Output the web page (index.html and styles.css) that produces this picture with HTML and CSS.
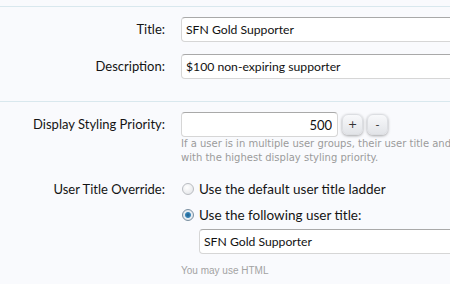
FILE: index.html
```html
<!DOCTYPE html>
<html lang="en">
<head>
  <meta charset="UTF-8" />
  <title>User Group Options</title>
  <link rel="stylesheet" href="styles.css">
</head>
<body>

  <form class="form">
    <fieldset class="section">
      <div class="row">
        <label class="label" for="title">Title:</label>
        <div class="control">
          <input class="text" id="title" type="text" value="SFN Gold Supporter" />
        </div>
      </div>
      <div class="row">
        <label class="label" for="description">Description:</label>
        <div class="control">
          <input class="text" id="description" type="text" value="$100 non-expiring supporter" />
        </div>
      </div>
    </fieldset>

    <fieldset class="section">
      <div class="row">
        <label class="label" for="priority">Display Styling Priority:</label>
        <div class="control">
          <div class="spin">
            <input class="text number" id="priority" type="text" value="500" />
            <button type="button" class="spin-btn">+</button>
            <button type="button" class="spin-btn">-</button>
          </div>
          <p class="hint">If a user is in multiple user groups, their user title and<br>with the highest display styling priority.</p>
        </div>
      </div>

      <div class="row radios">
        <span class="label">User Title Override:</span>
        <div class="control">
          <label class="radio"><span class="dot"></span>Use the default user title ladder</label>
          <label class="radio"><span class="dot on"></span>Use the following user title:</label>
          <input class="text sub" type="text" value="SFN Gold Supporter" />
          <p class="note">You may use HTML</p>
        </div>
      </div>
    </fieldset>
  </form>

</body>
</html>
```

FILE: styles.css
```css
  * {
    margin: 0;
    padding: 0;
    box-sizing: border-box;
  }

  html, body {
    width: 100%;
    height: 100%;
    overflow: hidden;
    background: #f9fafd;
    font-family: 'Lato', sans-serif;
    font-size: 13px;
    color: #141414;
  }

  .form {
    padding-top: 6px;
    overflow: hidden; /* los campos siguen mas alla del borde derecho */
  }

  /* Bloques separados por una linea */
  .section {
    border: none;
    border-top: 1px solid #d9e8ee;
    padding: 10px 0 22px;
  }

  .section:last-child {
    padding-bottom: 0;
  }

  .row {
    display: flex;
    align-items: flex-start;
    margin-bottom: 12px;
  }

  .row:last-child {
    margin-bottom: 0;
  }

  .label {
    width: 166px;
    padding-right: 1px;
    text-align: right;
    line-height: 25px;
    flex-shrink: 0;
  }

  .control {
    margin-left: 15px;
    flex: 1;
    min-width: 0;
  }

  .text {
    display: block;
    width: 320px;
    height: 25px;
    padding: 0 4px;
    font-family: 'Lato', sans-serif;
    font-size: 12.2px;
    color: #111;
    background: #fff;
    border: 1px solid #d6d6d6;
    border-top-color: #a9a9a9;
    border-radius: 4px;
    outline: none;
  }

  .spin {
    display: flex;
    align-items: center;
    gap: 4px;
  }

  .text.number {
    width: 157px;
    text-align: right;
    padding-right: 5px;
    font-size: 13px;
  }

  .spin-btn {
    width: 21px;
    height: 21px;
    font-family: 'DejaVu Sans', sans-serif;
    font-size: 11px;
    color: #333;
    background: linear-gradient(#f8f9fb, #e2e4e8);
    border: 1px solid #dcdee2;
    border-radius: 6px;
    box-shadow: 0 1px 3px rgba(0,0,0,0.35);
  }

  .hint {
    font-family: 'DejaVu Sans', sans-serif;
    font-size: 10px;
    line-height: 14px;
    color: #9b9b9b;
    white-space: nowrap;
  }

  /* Opciones de titulo */
  .radios .label {
    line-height: 24px;
  }

  .radio {
    display: flex;
    align-items: center;
    height: 24px;
    gap: 5px;
    font-size: 13.5px;
  }

  .radio + .radio {
    margin-top: 2px;
  }

  .dot {
    width: 12px;
    height: 12px;
    border-radius: 50%;
    border: 1px solid #b9bcc1;
    background: radial-gradient(circle at 40% 35%, #ffffff, #dfe1e5);
    margin-left: 1px;
  }

  .dot.on {
    background: radial-gradient(circle, #1d5e8c 0, #3a86b8 2.5px, #e8eef3 3.5px, #d8dde2 100%);
    border-color: #7a8fa0;
  }

  .text.sub {
    margin: 2px 0 0 18px;
  }

  .note {
    margin-top: 11px;
    font-family: 'Liberation Sans', sans-serif;
    font-size: 10px;
    line-height: 12px;
    color: #a3a3a3;
  }
```
